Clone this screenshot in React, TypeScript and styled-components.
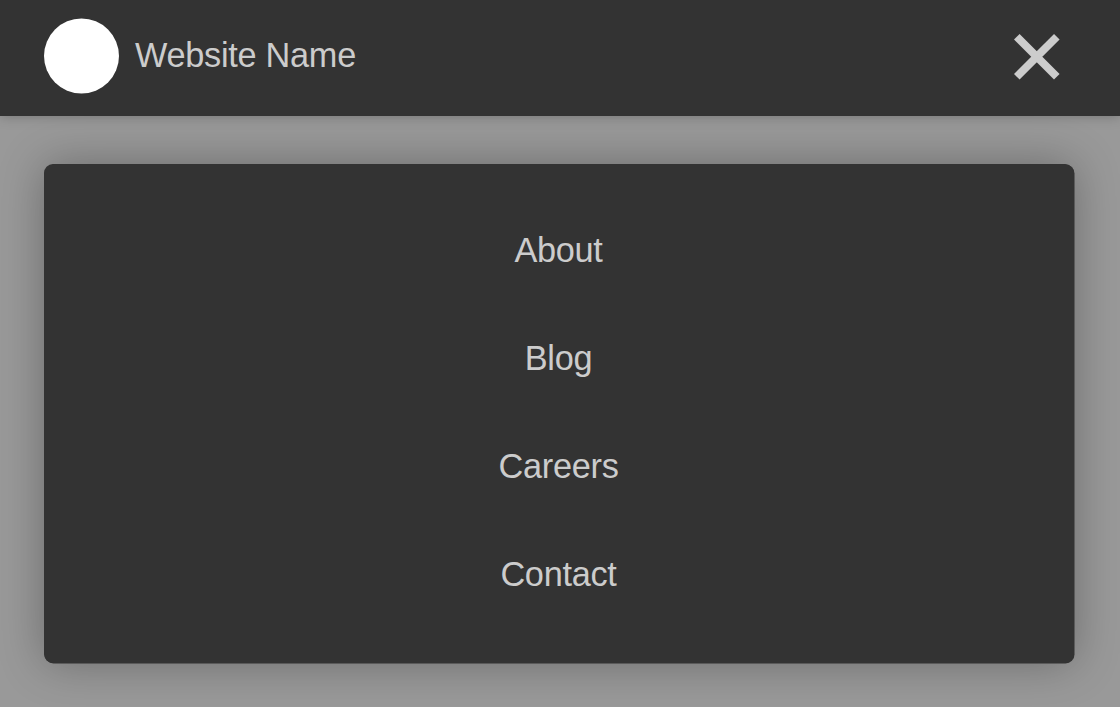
import React from 'react';
import styled, { createGlobalStyle } from 'styled-components';

const GlobalStyle = createGlobalStyle`
  * { box-sizing: border-box; }
  body {
    margin: 0;
    background: #999;
    color: #ccc;
    font-family: "Liberation Sans", Arial, sans-serif;
    font-size: 34.3px;
    letter-spacing: -0.28px;
  }
`;

const Page = styled.div`
  height: 707px;
  overflow: hidden;
`;

const Header = styled.header`
  display: flex;
  align-items: center;
  height: 116px;
  padding: 0 60px 4px 44px;
  background: #333;
  box-shadow: 0 0 12px rgba(0, 0, 0, 0.25);
`;

const Logo = styled.div`
  width: 75px;
  height: 75px;
  border-radius: 50%;
  background: #fff;
  transform: translateY(-0.5px);
`;

const SiteName = styled.span`
  margin-left: 16px;
  line-height: 40px;
  padding-bottom: 2px;
`;

const CloseButton = styled.button`
  display: flex;
  margin: 2px 0 0 auto;
  padding: 0;
  border: 0;
  background: none;
  color: inherit;
`;

const Menu = styled.nav`
  display: flex;
  flex-direction: column;
  margin: 48px 46px 0 44px;
  height: 499px;
  padding: 32px 1px 32px 0;
  border-radius: 9px;
  background: #333;
  box-shadow: 0.5px 0.5px 0 #333, 0 0 46px rgba(0, 0, 0, 0.3);
`;

const MenuLink = styled.a`
  display: block;
  height: 108px;
  line-height: 108px;
  text-align: center;
`;

const links = ['About', 'Blog', 'Careers', 'Contact'];

export default function App() {
  return (
    <Page>
      <GlobalStyle />
      <Header>
        <Logo />
        <SiteName>Website Name</SiteName>
        <CloseButton aria-label="Close menu">
          <svg width="46" height="46" viewBox="0 0 46 46" fill="none" stroke="currentColor" strokeWidth="7.9">
            <path d="M2.8 2.8 42.8 42.8M42.8 2.8 2.8 42.8" />
          </svg>
        </CloseButton>
      </Header>
      <Menu>
        {links.map((label) => (
          <MenuLink key={label}>{label}</MenuLink>
        ))}
      </Menu>
    </Page>
  );
}
